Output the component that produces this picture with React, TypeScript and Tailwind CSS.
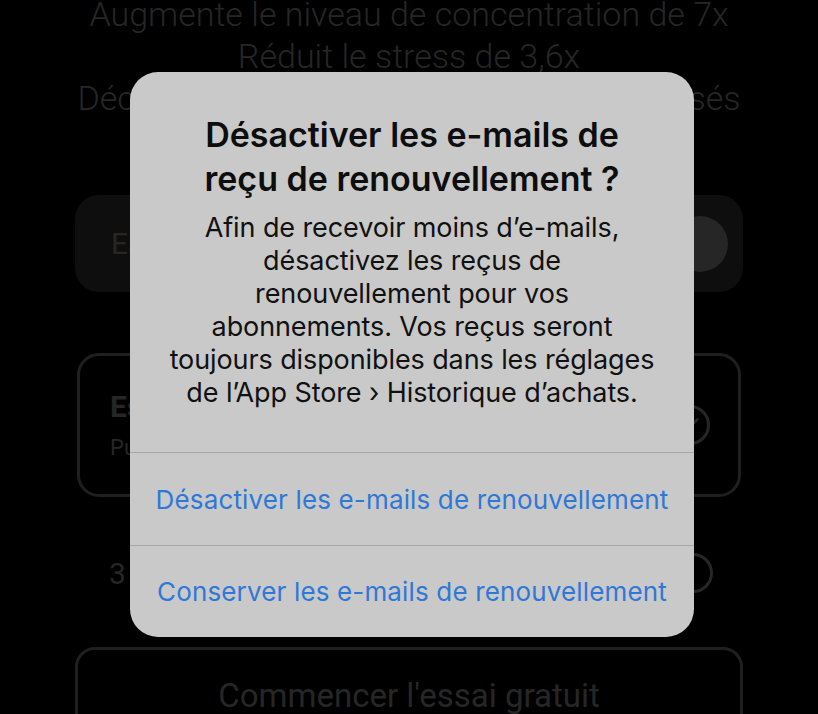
import { Check } from 'lucide-react';

const bgFont = { fontFamily: 'Roboto, "Noto Sans", sans-serif' };
const sysFont = { fontFamily: 'Inter, "Noto Sans", sans-serif' };

function Paywall() {
  return (
    <div className="flex flex-col items-center text-[#262626]" style={bgFont}>
      <div className="-mt-[7px] flex flex-col items-center text-[34px] font-light leading-[42px]">
        <p>Augmente le niveau de concentration de 7x</p>
        <p>Réduit le stress de 3,6x</p>
        <p>Découvre des états d'esprit vraiment apaisés</p>
      </div>

      <div className="mt-[76px] flex h-[97px] w-[668px] items-center justify-between rounded-[24px] bg-[#0e0e0e] pl-[36px] pr-[15px]">
        <span className="text-[30px]">Essai gratuit activé</span>
        <div className="h-[56px] w-[56px] rounded-full bg-[#262626]" />
      </div>

      <div className="mt-[61px] flex h-[144px] w-[664px] items-center justify-between rounded-[22px] border-[3px] border-[#1f1f1f] pl-[30px] pr-[28px]">
        <div className="flex flex-col">
          <span className="text-[30px] font-bold leading-[40px]">Essai de 7 jours</span>
          <span className="mt-[4px] text-[22px]">Puis 59,99 € par an</span>
        </div>
        <div className="flex h-[40px] w-[40px] items-center justify-center rounded-full border-[3px] border-[#262626]">
          <Check size={22} strokeWidth={3} className="text-[#262626]" />
        </div>
      </div>

      <div className="mt-[46px] flex h-[60px] w-[664px] items-center justify-between pl-[32px] pr-[28px]">
        <span className="text-[30px]">3 jours gratuits, puis mensuel</span>
        <div className="h-[40px] w-[40px] rounded-full border-[3px] border-[#262626]" />
      </div>

      <div className="mt-[44px] flex h-[90px] w-[668px] items-start justify-center rounded-[20px] border-[3px] border-[#1f1f1f] pt-[26px]">
        <span className="text-[33px] leading-[40px]">Commencer l'essai gratuit</span>
      </div>
    </div>
  );
}

function RenewalAlert() {
  return (
    <div
      className="absolute left-[130px] top-[72px] w-[564px] overflow-hidden rounded-[28px] bg-[#c9c9c9] text-center"
      style={sysFont}
    >
      <div className="px-[24px] pb-[43px] pt-[41px]">
        <h2 className="text-[34px] font-semibold leading-[44px] text-[#0d0d0d]">
          Désactiver les e-mails de
          <br />
          reçu de renouvellement ?
        </h2>
        <p className="mt-[10px] text-[27px] leading-[33px] tracking-[-0.1px] text-[#111]">
          Afin de recevoir moins d’e-mails,
          <br />
          désactivez les reçus de
          <br />
          renouvellement pour vos
          <br />
          abonnements. Vos reçus seront
          <br />
          toujours disponibles dans les réglages
          <br />
          de l’App Store › Historique d’achats.
        </p>
      </div>
      <button className="flex h-[93px] w-full items-center justify-center border-t border-[#a7a7a7] text-[26px] tracking-[0.15px] text-[#2e78d8]">
        Désactiver les e-mails de renouvellement
      </button>
      <button className="flex h-[92px] w-full items-center justify-center border-t border-[#a7a7a7] text-[26px] tracking-[0.15px] text-[#2e78d8]">
        Conserver les e-mails de renouvellement
      </button>
    </div>
  );
}

export default function App() {
  return (
    <div className="relative h-[714px] w-[818px] overflow-hidden bg-black">
      <Paywall />
      <RenewalAlert />
    </div>
  );
}
